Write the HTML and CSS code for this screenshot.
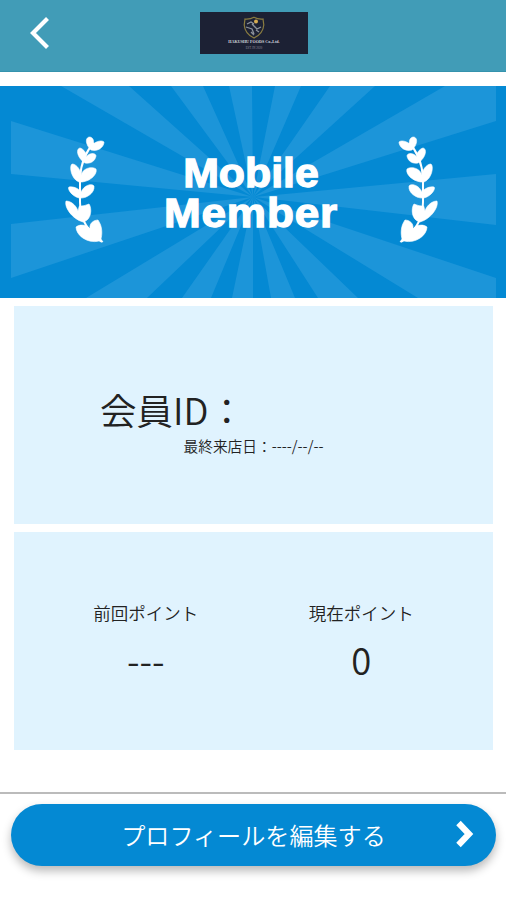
FILE: index.html
```html
<!DOCTYPE html>
<html lang="ja">
<head>
<meta charset="utf-8">
<title>Mobile Member</title>
<link rel="stylesheet" href="styles.css">
</head>
<body>
<header class="header">
  <button class="back" aria-label="戻る"><svg width="22" height="36" viewBox="0 0 22 36"><path d="M18.500 3.500 4 18 18.500 32.500" fill="none" stroke="#fff" stroke-width="4.200" stroke-linecap="butt"/></svg></button>
  <div class="brand">
    <svg class="crest" width="22" height="23" viewBox="0 0 22 23"><path d="M11 1.200Q7 3.500 2 3L1.200 9Q2 18 11 22Q20 18 20.800 9L20 3Q15 3.500 11 1.200Z" fill="none" stroke="#8b7d40" stroke-width="1.200"/><path d="M4 8l4-2 3 2M3 11l6 2 2 5M9 8l5 5 4-2M13 14l3 2M8 16l3 3" fill="none" stroke="#8c929b" stroke-width="1.300"/><circle cx="13" cy="5.500" r="2" fill="#d7ad52"/></svg>
    <span class="brand-name">HAKUSHU FOODS Co.,Ltd.</span>
    <span class="brand-sub">EST. IN 2020</span>
  </div>
</header>
<main>
  <section class="banner">
    <svg class="art" viewBox="0 86 506 212" preserveAspectRatio="none" aria-hidden="true">
      <defs>
        <clipPath id="rays"><path d="M11 86H496V298H11Z"/></clipPath>
        <g id="laurel" fill="#fff" stroke="#fff" stroke-width=".6">
          <path d="M102 242C89 231 80 222 80 202V178C81 163 86 151 94 143" fill="none" stroke-width="2"/>
          <path d="M91 150C85 144 85 137 90 137C94 138 94 142 93 144C97 141 102 140 104 142C104 147 98 152 91 150Z"/>
          <path d="M85 163C78 159 75 149 80 148C84 149 87 154 86 157C90 152 96 153 96 156C95 161 91 164 85 163Z"/>
          <path d="M79 182C71 179 69 166 72 164C77 164 81 171 81 175C83 168 92 166 96 169C98 175 88 183 79 182Z"/>
          <path d="M79 198C71 196 67 188 69 187C75 186 80 190 81 192C84 185 92 183 94 186C95 193 86 199 79 198Z"/>
          <path d="M83 222C72 219 64 207 66 201C72 201 77 207 78 211C79 207 79 205 81 206C84 206 86 205 89 204C92 208 92 220 83 222Z"/>
          <path d="M103 242L99 241C87 244 76 235 76 227C81 223 88 226 90 229C89 223 94 220 98 220C103 227 102 235 101 239Z"/>
        </g>
      </defs>
      <g fill="#1c95d9" clip-path="url(#rays)">
        <path d="M253 197 11 121V174ZM253 197 61 86H129ZM253 197 171 86H203ZM253 197 229 86H252ZM253 197 275 86H301ZM253 197 330 86H375ZM253 197 445 86H496V121ZM253 197 496 174V225ZM253 197 496 278V298H418ZM253 197 358 298H318ZM253 197 295 298H271ZM253 197 253 298H232ZM253 197 211 298H182ZM253 197 147 298H86ZM253 197 11 278V224Z"/>
      </g>
      <use href="#laurel"/>
      <use href="#laurel" transform="matrix(-1 0 0 1 503 0)"/>
    </svg>
    <h1 class="title"><span class="line">Mobile</span><span class="line wide">Member</span></h1>
  </section>
  <div class="cards">
    <section class="card member">
      <div class="member-id">会員ID：</div>
      <div class="visit">最終来店日：----/--/--</div>
    </section>
    <section class="card points">
      <div class="point"><div class="label">前回ポイント</div><div class="value">---</div></div>
      <div class="point"><div class="label">現在ポイント</div><div class="value">0</div></div>
    </section>
  </div>
</main>
<footer class="footer">
  <button class="edit"><span>プロフィールを編集する</span><svg class="next" width="20" height="28" viewBox="0 0 20 28"><path d="M3.500 3 14 14 3.500 25" fill="none" stroke="#fff" stroke-width="6.200"/></svg></button>
</footer>
</body>
</html>
```
FILE: styles.css
```css
* { box-sizing: border-box; }
body {
  margin: 0;
  height: 900px;
  display: flex;
  flex-direction: column;
  background: #fff;
  color: #222;
  font-family: "Noto Sans CJK JP", sans-serif;
  font-weight: 350;
}
button { border: 0; padding: 0; font: inherit; }
.header {
  height: 72px;
  flex: none;
  display: grid;
  grid-template-columns: 1fr 108px 1fr;
  align-items: start;
  background: #419cb7;
  border-bottom: 1px solid #3593ad;
}
.back { background: none; width: 22px; height: 36px; margin: 15px 0 0 29px; }
.back svg { display: block; }
.brand {
  height: 42px;
  margin: 12px -1px 0 1px;
  padding-top: 4px;
  display: flex;
  flex-direction: column;
  align-items: center;
  background: #1c2134;
  color: #d5d7de;
  font-family: "Liberation Serif", serif;
  white-space: nowrap;
}
.brand-name { font-size: 4.100px; line-height: 5px; font-weight: bold; }
.brand-sub { font-size: 3px; line-height: 4px; margin-top: 2px; color: #8d909c; }
main { flex: 1; }
.banner {
  height: 212px;
  margin-top: 14px;
  display: grid;
  background: #0489d3;
}
.art { grid-area: 1 / 1; width: 506px; height: 212px; display: block; }
.title {
  grid-area: 1 / 1;
  z-index: 1;
  margin: 67px 4px 0 0;
  text-align: center;
  color: #fff;
  font: bold 41px/40px "Liberation Sans", sans-serif;
  -webkit-text-stroke: 1.300px #fff;
}
.line { display: block; height: 40px; transform: scaleX(1.045); }
.wide { letter-spacing: .8px; transform: scaleX(1.075); }
.cards { display: grid; gap: 8px; margin: 8px 13px 0 14px; }
.card { height: 218px; background: #e0f3fe; }
.member { padding-top: 79px; }
.member-id { margin-left: 86px; font-size: 36.500px; line-height: 50px; }
.visit { margin-top: 1px; text-align: center; font-size: 14.700px; line-height: 20px; }
.points { display: grid; grid-template-columns: 1fr 1fr; padding: 68px 24px 0; }
.point { text-align: center; }
.label { font-size: 17.500px; line-height: 26px; }
.value { font-size: 36.500px; line-height: 54px; margin-top: 7px; }
.footer {
  height: 108px;
  flex: none;
  border-top: 2px solid #bbb;
  padding: 10px 10px 0 11px;
}
.edit {
  width: 100%;
  height: 62px;
  display: grid;
  grid-template-columns: 1fr auto 1fr;
  align-items: center;
  border-radius: 31px;
  background: #0489d3;
  color: #fff;
  font-size: 24.100px;
  box-shadow: 0 5px 10px rgba(0, 0, 0, .28);
}
.edit span { grid-column: 2; margin-bottom: 2px; }
.next { justify-self: end; margin: 0 21px 2px 0; }
```
